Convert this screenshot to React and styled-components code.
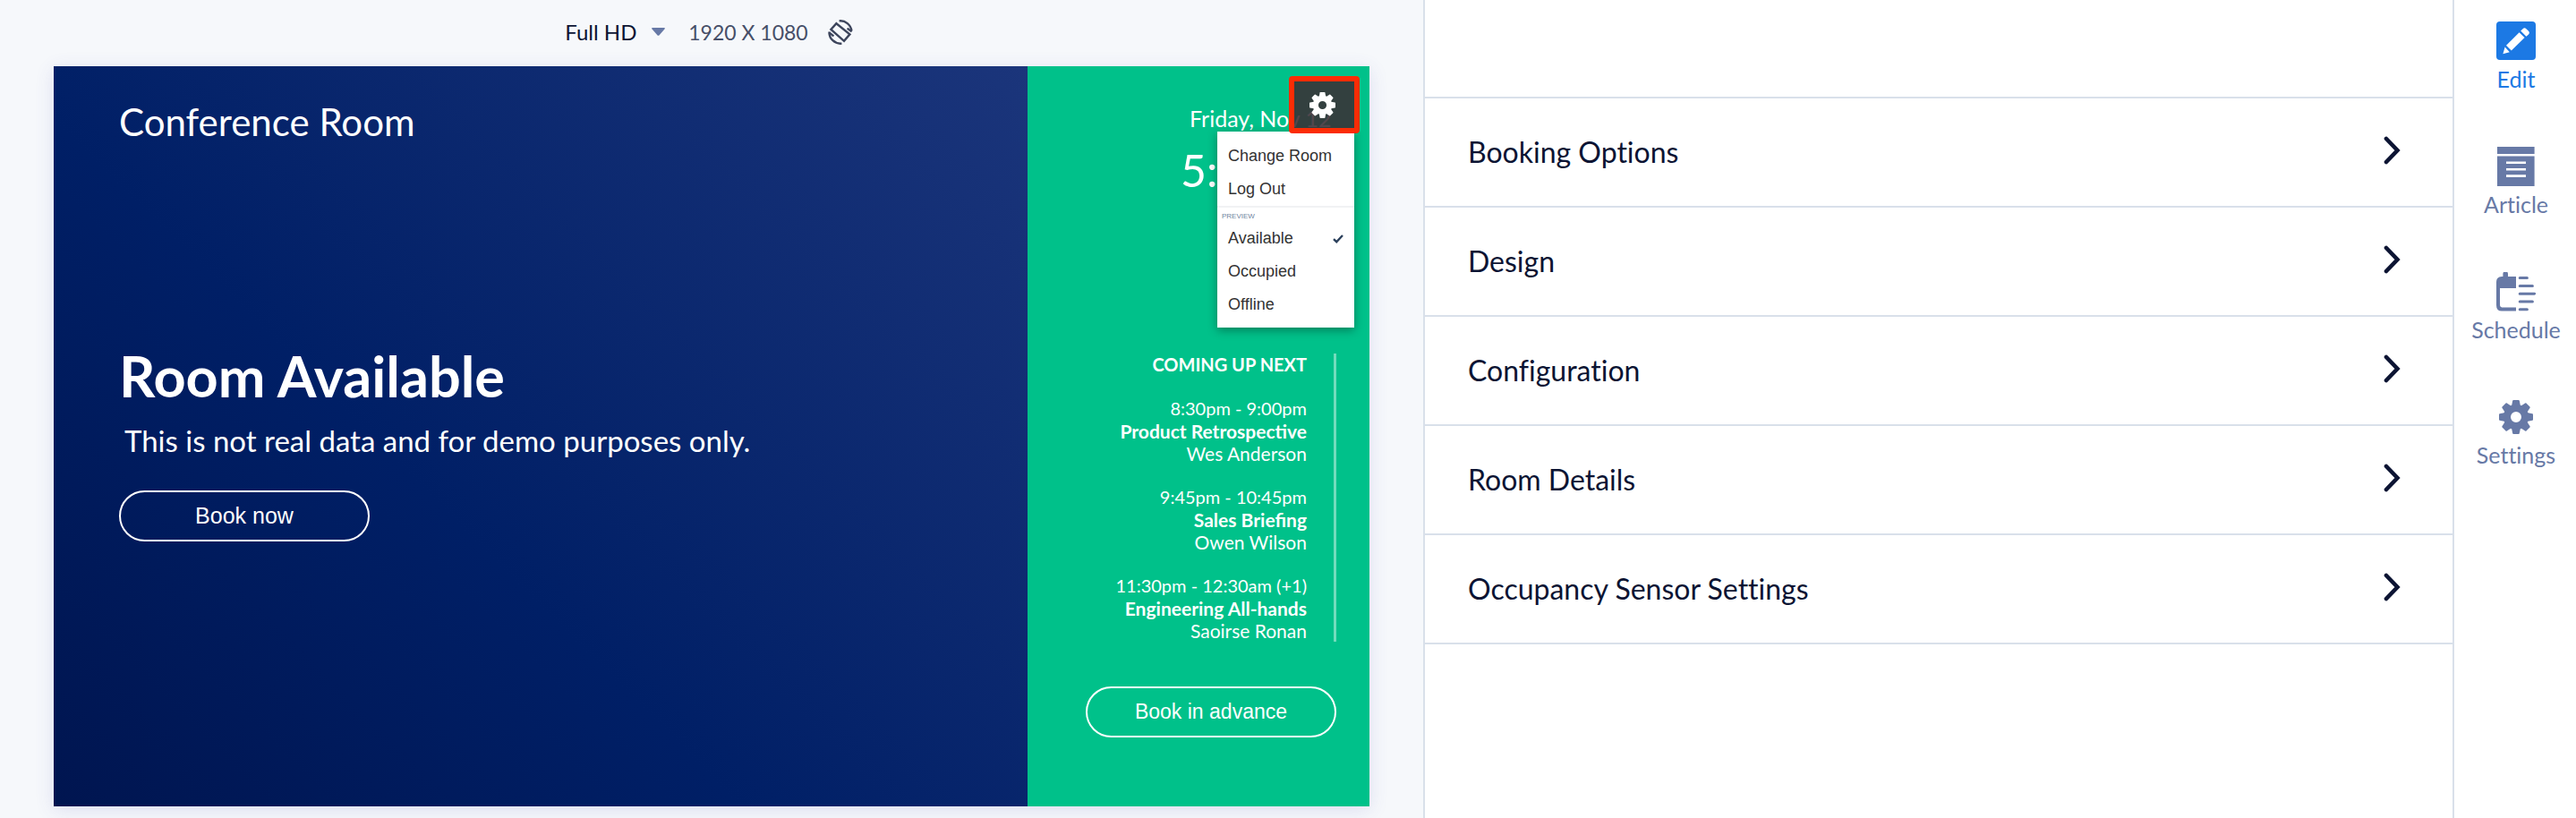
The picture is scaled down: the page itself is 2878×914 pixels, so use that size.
import { styled, createGlobalStyle, css } from "styled-components";

const GlobalStyle = createGlobalStyle`
    * {
        box-sizing: border-box;
    }
    body {
        margin: 0;
        background-color: #ffffff;
        font-family: Lato, "Open Sans", sans-serif;
        font-variant-ligatures: no-common-ligatures;
    }
    button, select {
        margin: 0;
        padding: 0;
        border: none;
        background: none;
        font-family: inherit;
        font-variant-ligatures: inherit;
        cursor: pointer;
    }
    h1, h2, p, ul {
        margin: 0;
        padding: 0;
        list-style: none;
    }
`;

/* Page */
const Page = styled.div`
    min-height: 100vh;
    display: grid;
    grid-template-columns: minmax(0, 159fr) minmax(0, 115fr) 138px;
`;
const PreviewPane = styled.main`
    background-color: #f6f8fb;
    padding: 0 60px 12px;
`;
const Toolbar = styled.div`
    height: 74px;
    padding: 0 6px 3px 0;
    display: flex;
    align-items: center;
    justify-content: center;
    gap: 22px;
    line-height: 28px;
    color: #474f68;
`;
const SizePicker = styled.label`
    display: flex;
    align-items: center;
    gap: 16px;
    margin-right: 4px;
`;
const SizeSelect = styled.select`
    appearance: none;
    font-size: 24px;
    line-height: 28px;
    color: #0c1433;
`;
const Resolution = styled.span`
    font-size: 23px;
`;
const IconButton = styled.button`
    display: flex;
    color: #3d455c;
`;

/* Room display */
const Display = styled.section`
    aspect-ratio: 16 / 9;
    display: grid;
    grid-template-columns: minmax(0, 74fr) minmax(0, 26fr);
    color: #ffffff;
    box-shadow: 0 4px 20px rgba(70, 70, 180, 0.14);
`;
const RoomSide = styled.div`
    display: flex;
    flex-direction: column;
    align-items: flex-start;
    padding: 36px 73px;
    background: linear-gradient(45deg, #001550 0%, #001f66 40%, #1b357b 100%);
`;
const RoomName = styled.h2`
    font-size: 42px;
    font-weight: 400;
    line-height: 52px;
`;
const RoomStatus = styled.h1`
    margin-top: 220px;
    font-size: 63px;
    font-weight: 700;
    line-height: 76px;
`;
const RoomNote = styled.p`
    padding-left: 6px;
    margin: 14px 0 36px;
    font-size: 33px;
    line-height: 40px;
`;
const PillButton = styled.button`
    width: 280px;
    height: 57px;
    border: 2px solid #ffffff;
    border-radius: 29px;
    color: #ffffff;
    font-family: "Liberation Sans", Arial, sans-serif;
    font-size: ${(props) => (props.$large ? 25 : 23)}px;
`;
const ScheduleSide = styled.div`
    position: relative;
    display: flex;
    flex-direction: column;
    align-items: flex-end;
    padding: 40px 37px;
    background-color: #00c18a;
`;
const Clock = styled.div`
    width: 174px;
    height: 281px;
`;
const DateText = styled.p`
    padding-left: 10px;
    font-size: 25px;
    line-height: 36px;
    white-space: nowrap;
`;
const TimeText = styled.p`
    font-size: 50px;
    line-height: 80px;
`;
const Upcoming = styled.ul`
    display: flex;
    flex-direction: column;
    gap: 24px;
    padding-right: 30px;
    margin-bottom: 50px;
    border-right: 3px solid #73dcbc;
    font-size: 20px;
    line-height: 25px;
    text-align: right;
`;
const UpcomingTitle = styled.li`
    font-weight: 700;
`;
const MeetingTitle = styled.p`
    font-size: 21px;
    font-weight: 700;
    font-variant-ligatures: normal;
`;
const MeetingHost = styled.p`
    font-size: 21px;
`;

/* Gear button and its menu lie over the display */
const GearButton = styled.button`
    position: absolute;
    top: 11px;
    right: 11px;
    z-index: 2;
    width: 79px;
    height: 64px;
    padding-right: 4px;
    display: flex;
    align-items: center;
    justify-content: center;
    border: 6px solid #fb2c05;
    border-radius: 4px;
    background-color: rgba(58, 46, 52, 0.88);
    color: #ffffff;
`;
const Menu = styled.div`
    position: absolute;
    top: 73px;
    right: 17px;
    z-index: 1;
    width: 153px;
    padding: 9px 0 7px;
    background-color: #ffffff;
    box-shadow: 0 3px 10px rgba(0, 0, 0, 0.35);
    font-family: "Liberation Sans", Arial, sans-serif;
`;
const MenuItem = styled.button`
    width: 100%;
    height: 37px;
    padding: 0 12px;
    display: flex;
    align-items: center;
    justify-content: space-between;
    font-size: 18px;
    color: #333333;
`;
const MenuLabel = styled.p`
    border-top: 2px solid #f1f2f4;
    padding: 4px 5px 0;
    height: 18px;
    font-size: 8px;
    line-height: 12px;
    color: #6f84a0;
`;

/* Settings panel */
const Panel = styled.section`
    padding-top: 108px;
    border-left: 2px solid #d9e0ea;
`;
const PanelList = styled.ul`
    border-top: 2px solid #d9e0ea;
`;
const PanelRow = styled.button`
    width: 100%;
    height: 122px;
    padding: 0 58px 0 48px;
    display: flex;
    align-items: center;
    justify-content: space-between;
    border-bottom: 2px solid #d9e0ea;
    font-size: 32px;
    line-height: 40px;
    color: #0c1433;
`;

/* Right rail */
const Rail = styled.nav`
    display: flex;
    flex-direction: column;
    align-items: center;
    gap: 62px;
    padding: 24px 0 0 2px;
    border-left: 2px solid #d9e0ea;
`;
const railActive = css`
    color: #1c79e4;
`;
const RailLink = styled.a`
    display: flex;
    flex-direction: column;
    align-items: center;
    gap: 6px;
    font-size: 25px;
    line-height: 28px;
    text-decoration: none;
    color: #6779a6;
    ${(props) => props.$active && railActive}
`;

const Caret = () => (
    <svg width="15" height="9" viewBox="0 0 15 9" aria-hidden="true">
        <path d="M1 0h13q1.6 0 .5 1.4L8.6 8.2q-1.1 1-2.2 0L.5 1.4Q-.6 0 1 0z" fill="#6779a6" />
    </svg>
);

const RotateIcon = () => (
    <svg width="28" height="28" viewBox="0 0 28 28" fill="none" stroke="currentColor" strokeWidth="2.4" aria-hidden="true">
        <path d="M9.400 4.200L24.400 16.400L18 23.800L3.400 11z" />
        <path d="M12.600 1.400A12.600 12.600 0 0 1 26.400 12.400" />
        <path d="M21.600 9.600L26.600 13.400" />
        <path d="M15.400 26.600A12.600 12.600 0 0 1 1.500 13.500" />
        <path d="M1.400 14.400L6.400 18.400" />
    </svg>
);

const Gear = ({ size }) => (
    <svg width={size} height={size} viewBox="-19 -19 38 38" fill="none" aria-hidden="true">
        <circle r="10" stroke="currentColor" strokeWidth="8" />
        {[0, 45, 90, 135, 180, 225, 270, 315].map((angle) => (
            <path
                key={angle}
                transform={`rotate(${angle})`}
                d="M-5.2 -11L-3.8 -18.2Q-3.6 -19 -2.8 -19H2.8Q3.6 -19 3.8 -18.2L5.2 -11z"
                fill="currentColor"
            />
        ))}
    </svg>
);

const Check = () => (
    <svg width="12" height="10" viewBox="0 0 12 10" fill="none" stroke="#2b405c" strokeWidth="2.4" aria-hidden="true">
        <path d="M1 5.2L4.2 8.2L11 1" />
    </svg>
);

const Chevron = () => (
    <svg width="19" height="36" viewBox="0 0 19 36" fill="none" stroke="#0c1433" strokeWidth="4.6" strokeLinecap="round" aria-hidden="true">
        <path d="M3 3L15.500 16L3 29" />
    </svg>
);

const EditIcon = () => (
    <svg width="44" height="44" viewBox="0 0 44 44" aria-hidden="true">
        <rect width="44" height="43" rx="4" fill="currentColor" />
        <g fill="#ffffff">
            <path d="M7.4 36.2L9.6 28.6L14.8 34.2z" />
            <path d="M11 26.8L25.6 12.2L31.6 18L16.8 32.6z" />
            <path d="M27.2 10.6L29.6 8.2Q31.4 6.4 33.4 8.2L35.8 10.6Q37.8 12.6 36 14.4L33.4 16.8z" />
        </g>
    </svg>
);

const ArticleIcon = () => (
    <svg width="44" height="44" viewBox="0 0 44 44" aria-hidden="true">
        <path d="M1 0H42.6V8H1zM1 10.4H42.6V44H1z" fill="currentColor" />
        <path d="M11 17.8H33M11 25.2H33M11 32.6H33" stroke="#ffffff" strokeWidth="2.6" />
    </svg>
);

const ScheduleIcon = () => (
    <svg width="44" height="44" viewBox="0 0 44 44" aria-hidden="true">
        <path
            d="M22 5H13V2Q13 -.6 10.2 -.6T7.4 2V5H6Q0 5.4 0 11V37Q0 43.6 6 43.6H22V39.6H7Q4 39.6 4 36.6V18H22z"
            fill="currentColor"
        />
        <path
            d="M26.2 6.6H34.4M26.2 15.4H40.4M26.2 24.2H42.6M26.2 33H40.4M26.2 41.8H34.4"
            stroke="currentColor"
            strokeWidth="3"
            strokeLinecap="round"
        />
    </svg>
);

const SettingsIcon = () => (
    <svg width="44" height="44" viewBox="0 0 44 44" aria-hidden="true">
        <g transform="translate(3 3)">
            <Gear size={38} />
        </g>
    </svg>
);

const meetings = [
    { time: "8:30pm - 9:00pm", title: "Product Retrospective", host: "Wes Anderson" },
    { time: "9:45pm - 10:45pm", title: "Sales Briefing", host: "Owen Wilson" },
    { time: "11:30pm - 12:30am (+1)", title: "Engineering All-hands", host: "Saoirse Ronan" },
];

const panelRows = ["Booking Options", "Design", "Configuration", "Room Details", "Occupancy Sensor Settings"];

const railItems = [
    { label: "Edit", Icon: EditIcon, active: true },
    { label: "Article", Icon: ArticleIcon },
    { label: "Schedule", Icon: ScheduleIcon },
    { label: "Settings", Icon: SettingsIcon },
];

function RoomDisplay() {
    return (
        <Display>
            <RoomSide>
                <RoomName>Conference Room</RoomName>
                <RoomStatus>Room Available</RoomStatus>
                <RoomNote>This is not real data and for demo purposes only.</RoomNote>
                <PillButton type="button" $large>Book now</PillButton>
            </RoomSide>
            <ScheduleSide>
                <Clock>
                    <DateText>Friday, Nov 12</DateText>
                    <TimeText>5:</TimeText>
                </Clock>
                <Upcoming>
                    <UpcomingTitle>COMING UP NEXT</UpcomingTitle>
                    {meetings.map(({ time, title, host }) => (
                        <li key={title}>
                            <p>{time}</p>
                            <MeetingTitle>{title}</MeetingTitle>
                            <MeetingHost>{host}</MeetingHost>
                        </li>
                    ))}
                </Upcoming>
                <PillButton type="button">Book in advance</PillButton>
                <GearButton type="button" aria-label="Room menu">
                    <Gear size={29} />
                </GearButton>
                <Menu>
                    <MenuItem type="button">Change Room</MenuItem>
                    <MenuItem type="button">Log Out</MenuItem>
                    <MenuLabel>PREVIEW</MenuLabel>
                    <MenuItem type="button">Available <Check /></MenuItem>
                    <MenuItem type="button">Occupied</MenuItem>
                    <MenuItem type="button">Offline</MenuItem>
                </Menu>
            </ScheduleSide>
        </Display>
    );
}

function App() {
    return (
        <Page>
            <GlobalStyle />
            <PreviewPane>
                <Toolbar>
                    <SizePicker>
                        <SizeSelect aria-label="Screen size">
                            <option>Full HD</option>
                        </SizeSelect>
                        <Caret />
                    </SizePicker>
                    <Resolution>1920 X 1080</Resolution>
                    <IconButton type="button" aria-label="Rotate screen">
                        <RotateIcon />
                    </IconButton>
                </Toolbar>
                <RoomDisplay />
            </PreviewPane>
            <Panel>
                <PanelList>
                    {panelRows.map((row) => (
                        <li key={row}>
                            <PanelRow type="button">
                                {row}
                                <Chevron />
                            </PanelRow>
                        </li>
                    ))}
                </PanelList>
            </Panel>
            <Rail>
                {railItems.map(({ label, Icon, active }) => (
                    <RailLink key={label} href="#" $active={active}>
                        <Icon />
                        {label}
                    </RailLink>
                ))}
            </Rail>
        </Page>
    );
}

export default App;
